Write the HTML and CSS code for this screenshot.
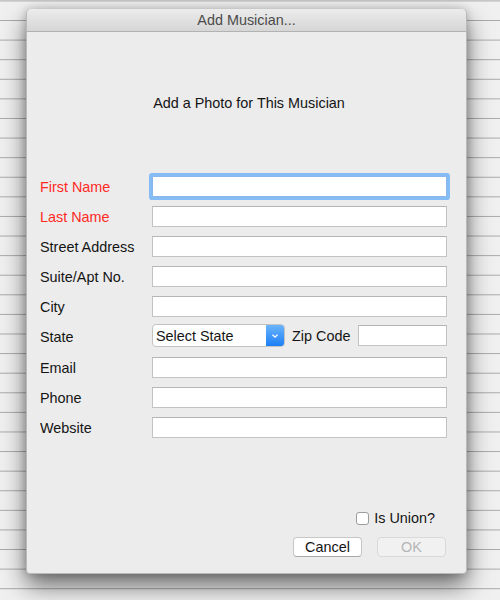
FILE: index.html
```html
<!DOCTYPE html>
<html lang="en">
<head>
  <meta charset="UTF-8" />
  <meta name="viewport" content="width=device-width, initial-scale=1.0"/>
  <title>Add Musician</title>
  <link rel="stylesheet" href="styles.css">
</head>
<body>

  <div class="dialog">
    <div class="title-bar">Add Musician...</div>

    <div class="dialog-body">
      <p class="photo-text">Add a Photo for This Musician</p>

      <div class="form-grid">
        <label class="required" for="first">First Name</label>
        <input type="text" id="first" class="field focused" />

        <label class="required" for="last">Last Name</label>
        <input type="text" id="last" class="field" />

        <label for="street">Street Address</label>
        <input type="text" id="street" class="field" />

        <label for="suite">Suite/Apt No.</label>
        <input type="text" id="suite" class="field" />

        <label for="city">City</label>
        <input type="text" id="city" class="field" />

        <label>State</label>
        <div class="state-row">
          <div class="select-box">
            <span class="select-text">Select State</span>
            <span class="select-arrow">
              <svg width="8" height="6" viewBox="0 0 8 6">
                <path d="M1.5 1.8 L4 4.2 L6.5 1.8" fill="none" stroke="#fff" stroke-width="1.3"/>
              </svg>
            </span>
          </div>
          <label class="zip-label" for="zip">Zip Code</label>
          <input type="text" id="zip" class="field zip" />
        </div>

        <label class="email-label" for="email">Email</label>
        <input type="text" id="email" class="field email-field" />

        <label for="phone">Phone</label>
        <input type="text" id="phone" class="field" />

        <label for="website">Website</label>
        <input type="text" id="website" class="field" />
      </div>

      <div class="footer">
        <div class="union-row">
          <span class="checkbox"></span>
          <span>Is Union?</span>
        </div>
        <div class="button-row">
          <button class="btn">Cancel</button>
          <button class="btn disabled">OK</button>
        </div>
      </div>
    </div>
  </div>

</body>
</html>
```

FILE: styles.css
```css
html {
  overflow: hidden;
}

body {
  font-family: "Liberation Sans", Arial, sans-serif;
  font-size: 14.4px;
  color: #141414;
  margin: 0;
  padding: 9px 0 0 26px;
  height: 600px;
  box-sizing: border-box;
  background-color: #f1f0f1;
  background-image: linear-gradient(to bottom, transparent 18.6px, #a9a9a9 18.6px);
  background-size: 100% 19.6px;
  background-position: 0 1.4px;
}

.dialog {
  width: 441px;
  height: 565px;
  box-sizing: border-box;
  display: flex;
  flex-direction: column;
  background-color: #ececec;
  border: 1px solid #b9b9b9;
  border-top: none;
  border-radius: 5px 5px 4px 4px;
  box-shadow: 0 12px 24px rgba(0, 0, 0, 0.55), 0 0 8px rgba(0, 0, 0, 0.2);
}

.title-bar {
  height: 22px;
  line-height: 22px;
  text-align: center;
  color: #4b4b4b;
  background: linear-gradient(to bottom, #ececec, #d6d6d6);
  border-bottom: 1px solid #b2b2b2;
  border-radius: 5px 5px 0 0;
}

.dialog-body {
  flex: 1;
  display: flex;
  flex-direction: column;
  padding: 0 19px 16px 13px;
}

.photo-text {
  margin: 63px 0 0 0;
  padding-left: 11px;
  line-height: 16px;
  text-align: center;
}

.form-grid {
  display: grid;
  grid-template-columns: 112px minmax(0, 1fr);
  row-gap: 9px;
  align-items: center;
  margin-top: 65px;
}

.form-grid label {
  line-height: 16px;
  white-space: nowrap;
}

.required {
  color: #ff2a1f;
}

.field {
  width: 100%;
  min-width: 0;
  height: 21px;
  box-sizing: border-box;
  border: 1px solid #c3c3c3;
  border-top-color: #b5b5b5;
  background: #fff;
  margin: 0;
  padding: 0 4px;
  font: inherit;
}

.focused {
  border-color: #8ab7ea;
  box-shadow: 0 0 0 3px #86bcf5;
  border-radius: 1px;
}

.state-row {
  display: flex;
  align-items: center;
  margin-top: -2px;
}

.email-label,
.email-field {
  margin-top: 1px;
}

.select-box {
  flex: none;
  width: 133px;
  height: 23px;
  box-sizing: border-box;
  display: flex;
  background: #fff;
  border: 1px solid #c3c3c3;
  border-radius: 4px;
  overflow: hidden;
}

.select-text {
  flex: 1;
  line-height: 23px;
  padding-left: 3px;
}

.select-arrow {
  width: 18px;
  display: flex;
  align-items: center;
  justify-content: center;
  background: linear-gradient(to bottom, #6cb4fb, #1b7ff5);
}

.zip-label {
  flex: none;
  margin: 0 8px 0 7px;
}

.zip {
  flex: 1;
  width: auto;
}

.footer {
  margin-top: auto;
}

.union-row {
  display: flex;
  align-items: center;
  justify-content: flex-end;
  gap: 5px;
  padding-right: 12px;
  line-height: 16px;
}

.checkbox {
  width: 13px;
  height: 13px;
  box-sizing: border-box;
  background: #fff;
  border: 1px solid #9d9d9d;
  border-radius: 3px;
}

.button-row {
  display: flex;
  justify-content: flex-end;
  gap: 15px;
  margin-top: 11px;
  padding-right: 1px;
}

.btn {
  width: 69px;
  height: 20px;
  padding: 0;
  font: inherit;
  color: #141414;
  background: #fff;
  border: 1px solid #c6c6c6;
  border-bottom-color: #a9a9a9;
  border-radius: 4px;
}

.btn.disabled {
  color: #b5b5b5;
  background: #f1f1f1;
  border-color: #d9d9d9;
}
```
